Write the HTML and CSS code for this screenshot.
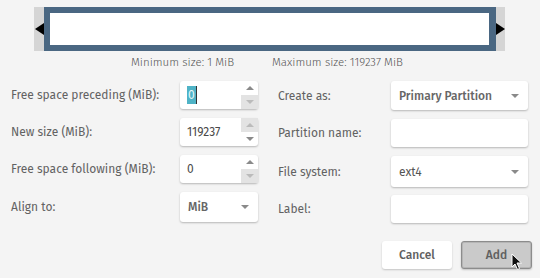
FILE: index.html
```html
<!DOCTYPE html>
<html lang="en">

<head>
  <meta charset="UTF-8" />
  <title>Create new Partition</title>
  <link rel="stylesheet" href="styles.css">
</head>

<body>
  <!-- barra da partição -->
  <div class="bar">
    <span class="arrow arrow-left"></span>
    <div class="bar-part">
      <div class="bar-inner"></div>
    </div>
    <span class="arrow arrow-right"></span>
  </div>

  <div class="limits">
    <span class="limit-min">Minimum size: 1 MiB</span>
    <span>Maximum size: 119237 MiB</span>
  </div>

  <div class="form">
    <div class="col col-left">
      <div class="row">
        <label>Free space preceding (MiB):</label>
        <div class="spin">
          <div class="spin-text"><span class="selected">0</span></div>
          <div class="spin-btns">
            <span class="spin-btn"><i class="tri-up"></i></span>
            <span class="spin-btn off"><i class="tri-down"></i></span>
          </div>
        </div>
      </div>
      <div class="row">
        <label>New size (MiB):</label>
        <div class="spin">
          <div class="spin-text">119237</div>
          <div class="spin-btns">
            <span class="spin-btn off"><i class="tri-up"></i></span>
            <span class="spin-btn"><i class="tri-down"></i></span>
          </div>
        </div>
      </div>
      <div class="row">
        <label>Free space following (MiB):</label>
        <div class="spin">
          <div class="spin-text">0</div>
          <div class="spin-btns">
            <span class="spin-btn"><i class="tri-up"></i></span>
            <span class="spin-btn off"><i class="tri-down"></i></span>
          </div>
        </div>
      </div>
      <div class="row row-tall">
        <label>Align to:</label>
        <div class="combo"><span class="combo-text bold">MiB</span><i class="tri-down"></i></div>
      </div>
    </div>

    <div class="col col-right">
      <div class="row row-29">
        <label>Create as:</label>
        <div class="combo"><span class="combo-text bold">Primary Partition</span><i class="tri-down"></i></div>
      </div>
      <div class="row">
        <label>Partition name:</label>
        <div class="entry"></div>
      </div>
      <div class="row row-31">
        <label>File system:</label>
        <div class="combo"><span class="combo-text">ext4</span><i class="tri-down"></i></div>
      </div>
      <div class="row row-label">
        <label>Label:</label>
        <div class="entry"></div>
      </div>
    </div>
  </div>

  <div class="buttons">
    <button class="btn">Cancel</button>
    <button class="btn btn-active">Add
      <svg class="cursor" width="12" height="18" viewBox="0 0 12 18">
        <path d="M1 1 L1 14 L4 11 L6.5 16.5 L8.5 15.5 L6 10 L10.5 10 Z" fill="#111" stroke="#fff" stroke-width="1" />
      </svg>
    </button>
  </div>
</body>

</html>
```

FILE: styles.css
```css
/* --- BASE --- */
* {
  margin: 0;
  padding: 0;
  box-sizing: border-box;
}

body {
  background: #f4f4f4;
  font-family: "Fira Sans", Lato, "Noto Sans", sans-serif;
  font-size: 12px;
  color: #626262;
  width: 540px;
  height: 278px;
  overflow: hidden;
}

/* --- BARRA --- */
.bar {
  display: flex;
  align-items: center;
  margin: 7px 0 0 34px;
  width: 471px;
  height: 44px;
  background: #d5d5d5;
}

.bar-part {
  flex: 1;
  height: 44px;
  background: #4a6782;
  padding: 6px 7px 6px 6px;
}

.bar-inner {
  height: 100%;
  background: #fff;
}

.arrow {
  width: 0;
  height: 0;
  border-top: 6px solid transparent;
  border-bottom: 6px solid transparent;
}

.arrow-left {
  margin-left: 1px;
  border-right: 9px solid #000;
}

.arrow-right {
  border-left: 9px solid #000;
}

.limits {
  display: flex;
  margin: 4px 0 0 131px;
  font-size: 11.5px;
  font-weight: 300;
  line-height: 14px;
  color: #555;
}

.limit-min {
  width: 141px;
}

/* --- FORMULARIO --- */
.form {
  display: flex;
  margin-top: 12px;
}

.col {
  display: flex;
  flex-direction: column;
  gap: 9px;
}

.col-left {
  margin-left: 10px;
  width: 248px;
}

.col-right {
  margin-left: 19px;
  width: 251px;
}

.row {
  display: flex;
  align-items: center;
  justify-content: space-between;
  height: 28px;
}

.row-tall {
  height: 30px;
}

.row-29 {
  height: 29px;
}

.row-31 {
  height: 31px;
}

.row-label {
  margin-top: -1px;
}

.row label {
  padding-left: 1px;
}

.spin,
.combo,
.entry {
  background: #fff;
  border-radius: 3px;
  box-shadow: 0 1px 2px rgba(0, 0, 0, 0.25);
  height: 100%;
}

.spin {
  display: flex;
  width: 78px;
}

.spin-text {
  flex: 1;
  display: flex;
  align-items: center;
  padding-left: 7px;
  color: #4a4a4a;
}

.selected {
  background: #4fb3c6;
  color: #e8f6f8;
  padding: 1px 1px;
  line-height: 16px;
  border-right: 1px solid #333;
}

.spin-btns {
  display: flex;
  flex-direction: column;
  width: 17px;
}

.spin-btn {
  flex: 1;
  display: flex;
  align-items: center;
  justify-content: center;
}

.spin-btn.off {
  background: #e3e3e3;
}

.spin-btn.off i {
  opacity: 0.45;
}

.tri-up,
.tri-down {
  width: 0;
  height: 0;
  border-left: 4px solid transparent;
  border-right: 4px solid transparent;
}

.tri-up {
  border-bottom: 4px solid #8a8a8a;
}

.tri-down {
  border-top: 4px solid #8a8a8a;
}

.combo {
  display: flex;
  align-items: center;
  justify-content: space-between;
  padding: 0 9px 0 8px;
}

.col-left .combo {
  width: 78px;
}

.col-right .combo,
.col-right .entry {
  width: 137px;
}

.combo-text {
  color: #555;
}

.bold {
  font-weight: 500;
  color: #666;
}

/* --- BOTOES --- */
.buttons {
  display: flex;
  justify-content: flex-end;
  gap: 9px;
  margin: 18px 8px 0 0;
}

.btn {
  position: relative;
  width: 70px;
  height: 28px;
  font-family: inherit;
  font-size: 12px;
  font-weight: 500;
  color: #606060;
  background: #fff;
  border: none;
  border-radius: 3px;
  box-shadow: 0 1px 2px rgba(0, 0, 0, 0.2);
}

.btn-active {
  width: 71px;
  background: #cacaca;
  border: 1px solid #8c8c8c;
  box-shadow: inset 0 0 0 1px #b5b5b5, 0 1px 2px rgba(0, 0, 0, 0.2);
}

.cursor {
  position: absolute;
  left: 49px;
  top: 11px;
}
```
